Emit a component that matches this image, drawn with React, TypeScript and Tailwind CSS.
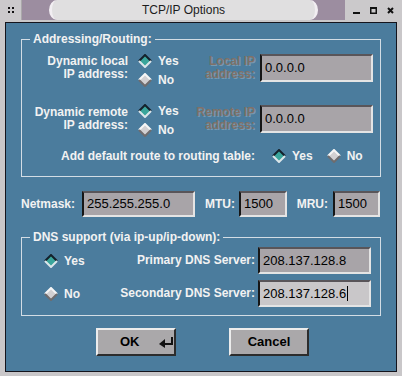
import React from "react";

// TCP/IP Options dialog — old GTK steel-blue theme

function Diamond({ on }: { on: boolean }) {
  return (
    <svg width="14" height="14" viewBox="0 0 14 14" className="shrink-0">
      <polygon points="7,1 13,7 7,13 1,7" fill={on ? "#3aa59b" : "#d2d0d2"} />
      <polyline points="1,7 7,1 13,7" fill="none" stroke={on ? "#14212b" : "#f6f6f6"} strokeWidth="2" />
      <polyline points="1,7 7,13 13,7" fill="none" stroke={on ? "#dce6ea" : "#6e6c6e"} strokeWidth="2" />
    </svg>
  );
}

function Radio({ label, on, className = "" }: { label: string; on: boolean; className?: string }) {
  return (
    <div className={`flex items-center gap-[6px] ${className}`}>
      <Diamond on={on} />
      <span className="text-[12px] font-bold leading-[14px] text-[#f2f2f2]">{label}</span>
    </div>
  );
}

function Field({ value, className = "", focused = false }: { value: string; className?: string; focused?: boolean }) {
  return (
    <div
      className={`flex items-center border-2 border-t-[#595559] border-l-[#161616] border-b-[#e4e4e4] border-r-[#e4e4e4] pl-[3px] text-[13px] text-black ${
        focused ? "bg-[#c9c7c9]" : "bg-[#a8a4a8]"
      } ${className}`}
    >
      <span>{value}</span>
      {focused && <span className="ml-[1px] h-[15px] w-[1px] bg-black" />}
    </div>
  );
}

function TitleBar() {
  return (
    <div className="flex h-[20px] shrink-0">
      <div className="flex w-[22px] items-center justify-center border-r border-[#aaa8aa] bg-[#cbc9cb]">
        <svg width="6" height="6" viewBox="0 0 6 6">
          <rect x="0" y="0" width="2" height="2" fill="#111" />
          <rect x="4" y="0" width="2" height="2" fill="#111" />
          <rect x="0" y="4" width="2" height="2" fill="#111" />
          <rect x="4" y="4" width="2" height="2" fill="#111" />
        </svg>
      </div>
      <div className="flex flex-1 bg-[#9c8da0] px-[27px]">
        <div className="flex flex-1 items-center justify-center rounded-[8px/10px] border-x-[3px] border-[#f2eef2] bg-[#e0dfe0] text-[12px] text-[#1c1c1c]">
          TCP/IP Options
        </div>
      </div>
      <div className="flex w-[57px] items-center gap-[10px] bg-[#cbc9cb] pl-[8px]">
        <svg width="7" height="7" viewBox="0 0 7 7">
          <rect x="0" y="5" width="7" height="2" fill="#111" />
        </svg>
        <svg width="7" height="7" viewBox="0 0 7 7">
          <rect x="0.75" y="0.75" width="5.5" height="5.5" fill="none" stroke="#111" strokeWidth="1.5" />
          <rect x="0" y="0" width="7" height="2" fill="#111" />
        </svg>
        <svg width="7" height="7" viewBox="0 0 7 7">
          <path d="M1 1 L6 6 M6 1 L1 6" stroke="#111" strokeWidth="2" />
        </svg>
      </div>
    </div>
  );
}

const label = "text-[12px] font-bold leading-[13px] text-[#f2f2f2]";
const dimLabel =
  "text-[12px] font-bold leading-[13px] text-[#7f7168] [text-shadow:1px_1px_0_rgba(190,205,215,0.4)]";

export default function App() {
  return (
    <div className="flex h-[376px] w-[402px] flex-col overflow-hidden bg-[#c9c7c9] font-['Liberation_Sans',Arial,sans-serif]">
      <TitleBar />
      <div className="flex flex-1 px-[5px] pb-[4px] pt-[2px]">
        <div className="flex flex-1 flex-col border border-[#14141c] bg-[#4b7c9d] px-[15px]">
          {/* Addressing / routing */}
          <fieldset className="mt-[9px] border border-[#d3dde5] pb-[13px] pt-[8px]">
            <legend className="ml-[8px] px-[3px] text-[12px] font-bold leading-[14px] text-[#f2f2f2]">
              Addressing/Routing:
            </legend>

            <div className="flex h-[28px] items-center">
              <div className={`w-[106px] text-right ${label}`}>
                Dynamic local
                <br />
                IP address:
              </div>
              <div className="ml-[10px] mt-[5px] flex w-[60px] flex-col">
                <Radio label="Yes" on className="h-[19px]" />
                <Radio label="No" on={false} className="h-[19px]" />
              </div>
              <div className={`w-[57px] whitespace-nowrap text-right ${dimLabel}`}>
                Local IP
                <br />
                address:
              </div>
              <Field value="0.0.0.0" className="ml-[5px] h-[28px] w-[113px]" />
            </div>

            <div className="mt-[23px] flex h-[28px] items-center">
              <div className={`w-[106px] whitespace-nowrap text-right ${label}`}>
                Dynamic remote
                <br />
                IP address:
              </div>
              <div className="ml-[10px] mt-[3px] flex w-[60px] flex-col">
                <Radio label="Yes" on className="h-[19px]" />
                <Radio label="No" on={false} className="h-[19px]" />
              </div>
              <div className={`flex w-[57px] flex-col items-end whitespace-nowrap text-right ${dimLabel}`}>
                <span>Remote IP</span>
                <span>address:</span>
              </div>
              <Field value="0.0.0.0" className="ml-[5px] h-[28px] w-[113px]" />
            </div>

            <div className="mt-[16px] flex h-[14px] items-center">
              <div className={`w-[233px] text-right ${label}`}>Add default route to routing table:</div>
              <Radio label="Yes" on className="ml-[17px]" />
              <Radio label="No" on={false} className="ml-[14px]" />
            </div>
          </fieldset>

          {/* Netmask / MTU / MRU */}
          <div className="mt-[14px] flex h-[26px] items-center">
            <div className={`w-[61px] ${label}`}>Netmask:</div>
            <Field value="255.255.255.0" className="h-[26px] w-[113px]" />
            <div className={`w-[44px] pr-[4px] text-right ${label}`}>MTU:</div>
            <Field value="1500" className="h-[26px] w-[48px]" />
            <div className={`w-[46px] pr-[5px] text-right ${label}`}>MRU:</div>
            <Field value="1500" className="h-[26px] w-[47px]" />
          </div>

          {/* DNS */}
          <fieldset className="mt-[13px] border border-[#d3dde5] pb-[8px] pt-[3px]">
            <legend className="ml-[8px] px-[3px] text-[12px] font-bold leading-[14px] text-[#f2f2f2]">
              DNS support (via ip-up/ip-down):
            </legend>
            <div className="flex h-[27px] items-center pl-[22px] pr-[9px]">
              <Radio label="Yes" on className="w-[60px]" />
              <div className={`flex-1 text-right ${label}`}>Primary DNS Server:</div>
              <Field value="208.137.128.8" className="ml-[3px] h-[27px] w-[113px]" />
            </div>
            <div className="mt-[6px] flex h-[27px] items-center pl-[22px] pr-[9px]">
              <Radio label="No" on={false} className="w-[60px]" />
              <div className={`flex-1 text-right ${label}`}>Secondary DNS Server:</div>
              <Field value="208.137.128.6" focused className="ml-[3px] h-[27px] w-[113px]" />
            </div>
          </fieldset>

          {/* Buttons */}
          <div className="mt-[12px] flex gap-[53px] pl-[75px]">
            <button
              type="button"
              className="flex h-[28px] w-[80px] items-center border-2 border-b-[#2c2c2c] border-l-[#ececec] border-r-[#2c2c2c] border-t-[#ececec] bg-[#aaa8aa] pl-[22px] text-[13px] font-bold text-black"
            >
              <span>OK</span>
              <svg width="15" height="12" viewBox="0 0 15 12" className="ml-[19px]">
                <polygon points="0,8 6,3 6,12" fill="#111" />
                <path d="M5 8 H13 V1" fill="none" stroke="#111" strokeWidth="2" />
              </svg>
            </button>
            <button
              type="button"
              className="flex h-[28px] w-[80px] items-center justify-center border-2 border-b-[#2c2c2c] border-l-[#ececec] border-r-[#2c2c2c] border-t-[#ececec] bg-[#aaa8aa] text-[13px] font-bold text-black"
            >
              Cancel
            </button>
          </div>
        </div>
      </div>
    </div>
  );
}
